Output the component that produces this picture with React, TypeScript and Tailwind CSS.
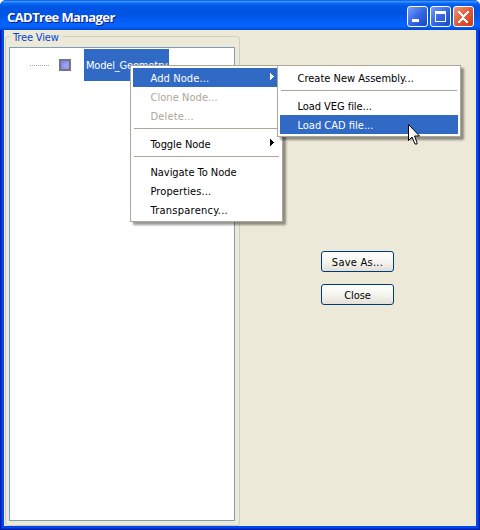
import React from 'react';

const ui = "font-['DejaVu_Sans_Condensed','DejaVu_Sans',sans-serif] [font-stretch:condensed] text-[11px] leading-[19px] whitespace-nowrap";

function Item({ label, spacing, active, disabled, arrow }: { label: string; spacing: string; active?: boolean; disabled?: boolean; arrow?: boolean }) {
  return (
    <div className={`flex h-[19px] items-center justify-between pl-[17.5px] pr-[6px] ${active ? 'bg-[#316ac5] text-white' : disabled ? 'text-[#aca899]' : 'text-black'}`}>
      <span className={`pt-px ${spacing}`}>{label}</span>
      {arrow && (
        <svg width="4" height="7" viewBox="0 0 4 7" shapeRendering="crispEdges" className="mb-[2px] fill-current">
          <path d="M0 0h1v1h1v1h1v1h1v1H3v1H2v1H1v1H0z" />
        </svg>
      )}
    </div>
  );
}

function Separator() {
  return <div className="mx-px mt-[3px] mb-[5px] h-px bg-[#aca899]" />;
}

function TitleButton({ close, children }: { close?: boolean; children: React.ReactNode }) {
  return (
    <div className={`flex h-[21px] w-[21px] items-center justify-center rounded-[3px] border border-white bg-linear-to-br ${close ? 'from-[#ef9478] via-[#e25b38] to-[#c93b15]' : 'from-[#789df4] via-[#3667e5] to-[#1748c6]'}`}>
      <svg width="19" height="19" viewBox="0 0 19 19" shapeRendering="crispEdges">{children}</svg>
    </div>
  );
}

function PushButton({ label, spacing }: { label: string; spacing: string }) {
  return (
    <button className={`${ui} flex h-[21px] w-[73px] items-center justify-center rounded-[3px] border border-[#003c74] bg-linear-to-b from-white via-[#f5f5f1] to-[#e3e0d6] pt-px text-black ${spacing}`}>
      {label}
    </button>
  );
}

export default function App() {
  return (
    <div className={`${ui} relative flex h-[530px] w-[480px] flex-col overflow-hidden rounded-t-[6px] bg-[#0831d9]`}>
      <header className="flex h-[30px] shrink-0 items-center justify-between bg-[linear-gradient(to_bottom,#0053e1_0%,#3b91ff_5%,#0466f3_12%,#0055e5_23%,#0054e3_48%,#0561fb_75%,#0665ff_87%,#0047d0_100%)] pr-[6px] pl-[7px]">
        <h1 className="pt-[3px] font-['Open_Sans','Noto_Sans',sans-serif] text-[13px] leading-[20px] font-bold tracking-[-0.58px] [font-stretch:normal] text-white [text-shadow:1px_1px_0_#0a1883]">CADTree Manager</h1>
        <div className="flex gap-[2px] pt-[2px]">
          <TitleButton><path d="M4 12h7v3H4z" fill="white" /></TitleButton>
          <TitleButton><path d="M4 4h11v11H4zM5 7v7h9V7z" fill="white" fillRule="evenodd" /></TitleButton>
          <TitleButton close><path d="M4 4h2v1h1v1h1v1h1v1h1V7h1V6h1V5h1V4h2v2h-1v1h-1v1h-1v1h-1v1h-1v1h1v1h1v1h1v1h1v2h-2v-1h-1v-1h-1v-1h-1v-1H9v1H8v1H7v1H6v1H4v-2h1v-1h1v-1h1v-1h1V9H7V8H6V7H5V6H4z" fill="white" /></TitleButton>
        </div>
      </header>
      <div className="flex min-h-0 flex-1 border-x-4 border-b-4 border-t-0 border-[#0047ed] bg-[#ece9d8]">
        <section className="relative mt-[6px] ml-px flex h-[490px] w-[235px] shrink-0 rounded-[3px] border border-[#d0d0bf] px-[3px] pt-[10px] pb-[4px]">
          <h2 className="absolute -top-[6px] left-[4px] bg-[#ece9d8] px-[3px] leading-[13px] tracking-[-0.15px] text-[#0046d5]">Tree View</h2>
          <div className="flex w-[226px] items-start border border-[#7f9db9] bg-white pt-px pl-[20px]">
            <div className="flex h-[32px] items-center">
              <div className="h-px w-[20px] bg-[repeating-linear-gradient(to_right,#aca899_0_1px,transparent_1px_2px)]" />
              <div className="ml-[9px] h-[12px] w-[12px] border-2 border-[#77777a] bg-[radial-gradient(circle_at_65%_60%,#a8a8ff,#7777ed)]" />
              <div className="ml-[13px] flex h-[32px] w-[85px] items-center bg-[#316ac5] pl-[2px] tracking-[-0.18px] text-white">Model_Geometry</div>
            </div>
          </div>
        </section>
        <main className="flex flex-1 flex-col gap-[12px] pt-[221px] pl-[81px]">
          <PushButton label="Save As..." spacing="tracking-[0.25px]" />
          <PushButton label="Close" spacing="tracking-[-0.1px]" />
        </main>
      </div>
      <div className="pointer-events-none absolute inset-x-0 top-[30px] bottom-0 border-x border-b border-[#001ea0]" />
      <div className="pointer-events-none absolute inset-x-px top-[30px] bottom-px border-x border-b border-[#0831d9]" />

      <nav className="absolute top-[65px] left-[130px] w-[153px] border border-[#aca899] bg-white p-[2px] shadow-[3px_3px_2px_#0006]">
        <Item label="Add Node..." spacing="tracking-[0.1px]" active arrow />
        <Item label="Clone Node..." spacing="tracking-[0.05px]" disabled />
        <Item label="Delete..." spacing="tracking-[0.15px]" disabled />
        <Separator />
        <Item label="Toggle Node" spacing="tracking-[-0.05px]" arrow />
        <Separator />
        <Item label="Navigate To Node" spacing="tracking-[-0.05px]" />
        <Item label="Properties..." spacing="tracking-[0.1px]" />
        <Item label="Transparency..." spacing="tracking-[0.25px]" />
      </nav>
      <nav className="absolute top-[65px] left-[277px] w-[184px] border border-[#aca899] bg-white p-[2px] shadow-[3px_3px_2px_#0006]">
        <Item label="Create New Assembly..." spacing="tracking-[0px]" />
        <Separator />
        <Item label="Load VEG file..." spacing="tracking-[-0.05px]" />
        <Item label="Load CAD file..." spacing="tracking-[0px]" active />
      </nav>
      <svg className="absolute top-[124px] left-[408px]" width="12" height="21" viewBox="0 0 12 21">
        <path d="M.5.5v16l3.500-3.500 3 7h2v-1.500l-2.500-6.500h5z" fill="white" stroke="black" />
      </svg>
    </div>
  );
}
